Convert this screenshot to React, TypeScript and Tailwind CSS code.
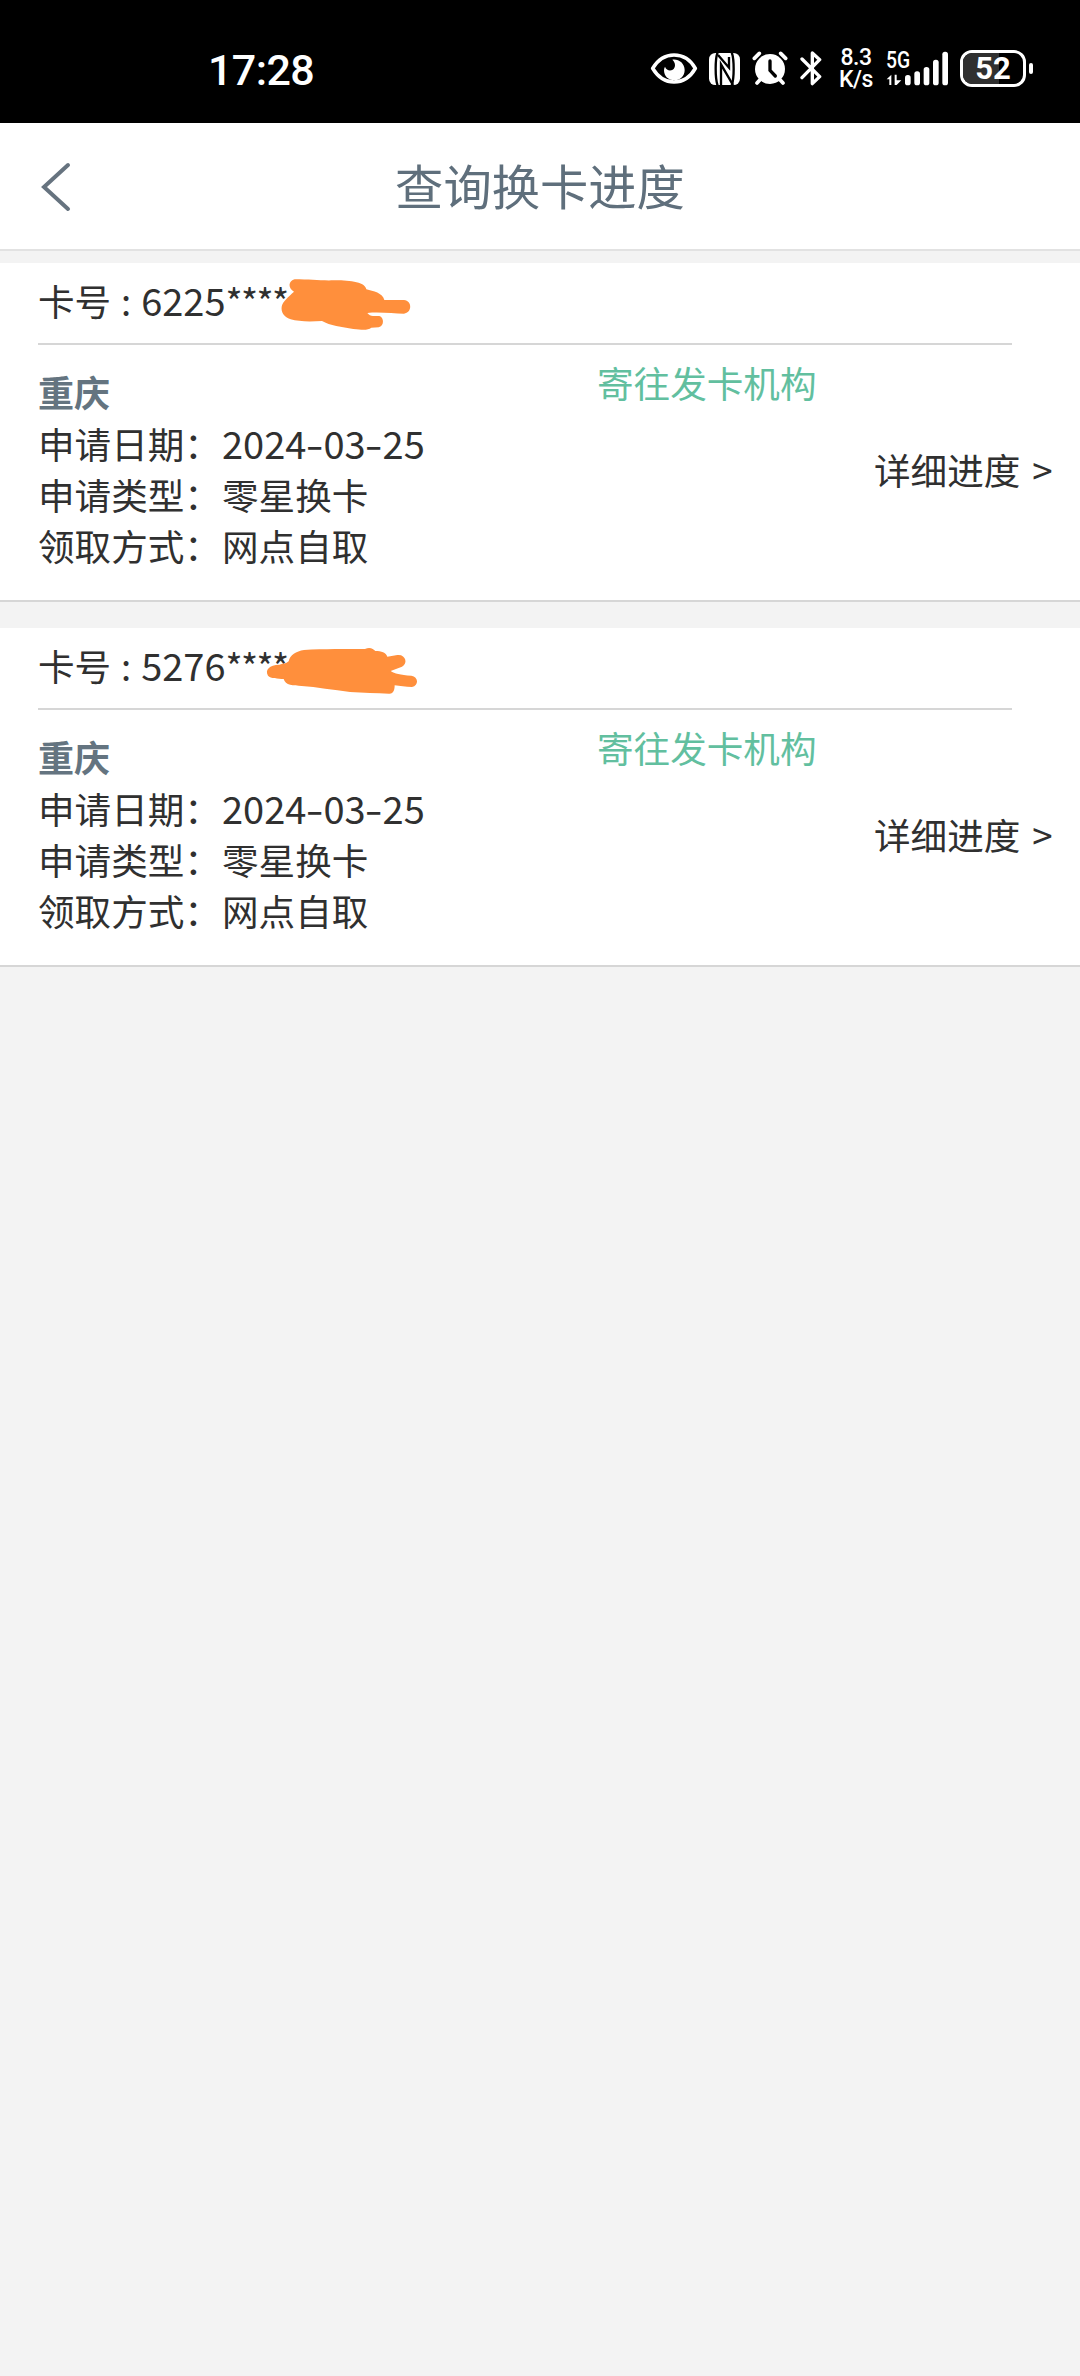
// Card replacement progress page

const cards = [
  {
    prefix: "6225",
    city: "重庆",
    status: "寄往发卡机构",
    date: "2024-03-25",
    type: "零星换卡",
    pickup: "网点自取",
  },
  {
    prefix: "5276",
    city: "重庆",
    status: "寄往发卡机构",
    date: "2024-03-25",
    type: "零星换卡",
    pickup: "网点自取",
  },
];

function EyeIcon() {
  return (
    <svg className="w-12 h-[35px]" viewBox="30 36 144 105" fill="none">
      <path
        d="M38 88C55 60 78 48 102 48s48 12 64 40c-16 28-40 41-64 41s-47-13-64-41Z"
        stroke="#fff"
        strokeWidth="11"
        strokeLinejoin="round"
      />
      <path
        d="M97 62c18-3 37 10 37 31 0 18-14 31-31 31-18 0-31-13-31-30 0-4 1-8 3-11 4 11 15 14 23 9 9-6 10-20-1-30Z"
        fill="#fff"
      />
    </svg>
  );
}

function NfcIcon() {
  return (
    <svg className="w-[31px] h-8" viewBox="207 40 93 96" fill="none">
      <rect x="207" y="40" width="93" height="96" rx="19" fill="#fff" />
      <g stroke="#000" strokeWidth="7">
        <path d="M233 38c-8 18-8 78 0 100" />
        <path d="M234 46 267 84V52" />
        <path d="M243 138V74l36 62" />
        <path d="M275 38c8 20 8 78 0 100" />
      </g>
    </svg>
  );
}

function AlarmIcon() {
  return (
    <svg className="w-9 h-[35px]" viewBox="336 36 108 105" fill="none">
      <circle cx="390" cy="90" r="45" fill="#fff" />
      <g stroke="#fff" strokeWidth="11" strokeLinecap="round">
        <path d="M343 58 358 43M437 58 422 43M360 122l-9 10M420 122l9 10" />
      </g>
      <path d="M390 66v28l16 17" stroke="#000" strokeWidth="10" strokeLinecap="round" />
    </svg>
  );
}

function BluetoothIcon() {
  return (
    <svg className="w-[22px] h-[35px]" viewBox="480 36 66 105" fill="none">
      <path
        d="M486 60 539 113 517 134V42L539 62 486 116"
        stroke="#fff"
        strokeWidth="10"
        strokeLinecap="round"
        strokeLinejoin="round"
      />
    </svg>
  );
}

function SignalIcon() {
  return (
    <div className="relative w-[63px] h-9 shrink-0">
      <span className="absolute left-0 top-0 origin-left scale-x-[.84] text-[23px] leading-[19px] font-medium">
        5G
      </span>
      <svg className="w-[63px] h-9" viewBox="198 33 189 108">
        <g fill="#fff">
          <path d="M200 118 214 104v31h-6v-17ZM224 104h6v17h14l-14 14h-6Z" />
          <rect x="255" y="105" width="17" height="31" rx="8" />
          <rect x="283" y="94" width="17" height="42" rx="8" />
          <rect x="311" y="81" width="17" height="55" rx="8" />
          <rect x="339" y="59" width="17" height="77" rx="8" />
          <rect x="367" y="35" width="17" height="101" rx="8" />
        </g>
      </svg>
    </div>
  );
}

function Battery() {
  return (
    <div className="flex items-center gap-[3px]">
      <div className="relative flex h-[37px] w-[66px] items-center justify-center rounded-[12px] border-[3px] border-white">
        <div className="absolute inset-y-0 left-0 w-[36px] rounded-l-[9px] bg-[#303030]" />
        <span className="relative text-[31px] leading-[31px] font-bold">52</span>
      </div>
      <div className="h-[11px] w-1 rounded-full bg-white" />
    </div>
  );
}

function StatusBar() {
  return (
    <div className="flex h-[123px] bg-black text-white font-[Roboto,sans-serif]">
      <div className="w-[650px] pt-[48px] pl-[208px] text-[43px] leading-[44px] font-medium tracking-[-0.6px]">
        17:28
      </div>
      <div className="flex h-[37px] mt-[50px] items-center">
        <EyeIcon />
        <div className="ml-[11px]">
          <NfcIcon />
        </div>
        <div className="ml-3">
          <AlarmIcon />
        </div>
        <div className="ml-3">
          <BluetoothIcon />
        </div>
        <div className="ml-[13px] w-[42px] text-center text-[23px] leading-[22px] font-medium tracking-[-0.5px]">
          <div>8.3</div>
          <div>K/s</div>
        </div>
        <div className="ml-[9px]">
          <SignalIcon />
        </div>
        <div className="ml-[11px]">
          <Battery />
        </div>
      </div>
    </div>
  );
}

// Orange marker strokes over the hidden digits
function FirstMarker() {
  return (
    <svg className="absolute left-[280px] top-[14px] w-[134px] h-[56px]" viewBox="840 80 402 168">
      <path
        d="M884 87 C930 87 960 91 1000 90 C1040 90 1094 92 1099 117 C1120 122 1148 128 1153 149 L1212 149 C1237 151 1237 187 1212 190 C1180 190 1140 184 1102 188 C1107 194 1112 197 1119 197 L1138 197 C1153 201 1153 228 1136 231 L1114 232 C1103 241 1085 238 1060 236 C1025 230 990 226 966 212 C930 214 895 214 872 207 C850 199 843 184 845 169 C848 153 866 139 882 124 C862 112 866 91 884 87Z"
        fill="#ff8f3c"
      />
    </svg>
  );
}

function SecondMarker() {
  return (
    <svg className="absolute left-[264px] top-[17px] w-[156px] h-[54px]" viewBox="792 165 468 162">
      <path
        d="M866 214 C870 194 888 184 912 180 C970 176 1040 178 1095 177 C1108 170 1120 175 1126 183 C1144 183 1158 187 1162 200 L1192 195 C1217 192 1225 220 1206 230 L1172 243 C1184 251 1200 255 1234 257 C1256 261 1257 286 1236 291 C1216 291 1200 287 1184 286 C1184 299 1181 312 1167 311 C1130 310 1090 308 1050 306 C1000 300 950 291 905 288 C880 287 856 286 851 267 C834 265 812 267 804 257 C794 239 808 225 838 224 C848 222 858 221 866 214Z"
        fill="#ff8f3c"
      />
    </svg>
  );
}

const markers = [FirstMarker, SecondMarker];

function Row({ label, children }: { label: string; children: React.ReactNode }) {
  return (
    <div className="flex h-[51px] items-center">
      <span className="w-[184px] whitespace-nowrap">{label}：</span>
      <span>{children}</span>
    </div>
  );
}

function CardItem({ card, index }: { card: (typeof cards)[number]; index: number }) {
  const Marker = markers[index];

  return (
    <section className="relative h-[339px] border-b-2 border-[#d6d6d6] bg-white pl-[38px] text-[36.6px] leading-[51px] text-[#303030]">
      <div className="flex mr-[68px] h-[82px] border-b-2 border-[#d6d6d6] pt-3">
        <span>卡号</span>
        <span className="w-[30px] text-center">:</span>
        <span className="text-[38px] leading-[49px]">{card.prefix}</span>
        <span className="tracking-[-1.6px]">****</span>
      </div>
      <Marker />

      <div className="flex">
        <div className="w-[559px] pt-[21px]">
          <div className="h-[52px] text-[36px] font-bold text-[#647480]">{card.city}</div>
          <Row label="申请日期">
            <span className="block pb-0.5 text-[38px] leading-[49px]">
              {card.date.split("-").map((part, i) => (
                <span key={i}>
                  {i > 0 && (
                    <span className="inline-block w-[17px] text-center">
                      <span className="inline-block scale-x-[1.35]">-</span>
                    </span>
                  )}
                  {part}
                </span>
              ))}
            </span>
          </Row>
          <Row label="申请类型">{card.type}</Row>
          <Row label="领取方式">{card.pickup}</Row>
        </div>
        <div className="w-[277px] pt-3 text-[#62bf9f]">{card.status}</div>
        <div className="pt-[99px] whitespace-nowrap">
          详细进度<span className="ml-3">&gt;</span>
        </div>
      </div>
    </section>
  );
}

export default function App() {
  return (
    <div className="h-[2376px] w-[1080px] overflow-hidden bg-[#f3f3f3] font-['Noto_Sans_CJK_SC',sans-serif]">
      <StatusBar />
      <header className="relative flex h-32 items-center justify-center border-b-2 border-[#e2e2e2] bg-white">
        <svg className="absolute left-[41px] top-[38px] w-[30px] h-[52px]" viewBox="0 0 30 52" fill="none">
          <path d="M27 4 3 26l24 22" stroke="#66737f" strokeWidth="4" strokeLinecap="round" />
        </svg>
        <h1 className="pb-[3px] text-[48.3px] leading-none text-[#5f6f7c]">查询换卡进度</h1>
      </header>
      <main className="mt-3 flex flex-col gap-[26px]">
        {cards.map((card, i) => (
          <CardItem key={card.prefix} card={card} index={i} />
        ))}
      </main>
    </div>
  );
}
